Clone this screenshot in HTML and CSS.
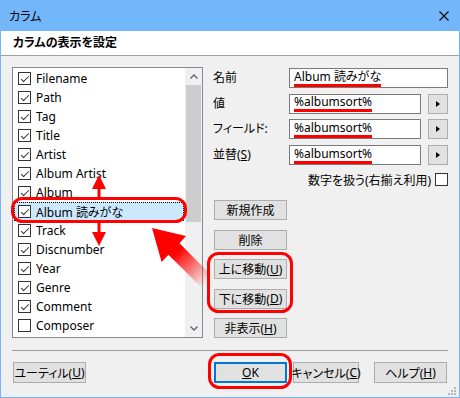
FILE: index.html
```html
<!DOCTYPE html>
<html lang="ja">
  <head>
    <meta charset="UTF-8" />
    <title>カラム</title>
    <link rel="stylesheet" href="styles.css">
  </head>
  <body>
    <div class="window">
      <header class="titlebar">
        <span class="title">カラム</span>
        <svg class="close" width="10" height="10" viewBox="0 0 10 10">
          <path d="M0.5 0.5 L9.5 9.5 M9.5 0.5 L0.5 9.5" stroke="#000" stroke-width="1.1" fill="none" />
        </svg>
      </header>

      <div class="heading">カラムの表示を設定</div>

      <section class="content">
        <div class="list">
          <ul class="items">
            <li><span class="cb on"></span>Filename</li>
            <li><span class="cb on"></span>Path</li>
            <li><span class="cb on"></span>Tag</li>
            <li><span class="cb on"></span>Title</li>
            <li><span class="cb on"></span>Artist</li>
            <li><span class="cb on"></span>Album Artist</li>
            <li><span class="cb on"></span>Album</li>
            <li class="selected"><span class="cb on"></span>Album 読みがな</li>
            <li><span class="cb on"></span>Track</li>
            <li><span class="cb on"></span>Discnumber</li>
            <li><span class="cb on"></span>Year</li>
            <li><span class="cb on"></span>Genre</li>
            <li><span class="cb on"></span>Comment</li>
            <li><span class="cb"></span>Composer</li>
          </ul>
          <div class="scrollbar">
            <span class="sb-btn">
              <svg width="8" height="5" viewBox="0 0 8 5"><path d="M0.5 4.5 L4 1 L7.5 4.5" stroke="#606060" stroke-width="1.3" fill="none" /></svg>
            </span>
            <span class="thumb"></span>
            <span class="sb-space"></span>
            <span class="sb-btn">
              <svg width="8" height="5" viewBox="0 0 8 5"><path d="M0.5 0.5 L4 4 L7.5 0.5" stroke="#606060" stroke-width="1.3" fill="none" /></svg>
            </span>
          </div>
        </div>

        <div class="side">
          <div class="fields">
            <label>名前</label>
            <div class="input wide"><span class="mark">Album 読みがな</span></div>

            <label>値</label>
            <div class="input"><span class="mark">%albumsort%</span></div>
            <button class="pick"><span class="tri"></span></button>

            <label>フィールド:</label>
            <div class="input"><span class="mark">%albumsort%</span></div>
            <button class="pick"><span class="tri"></span></button>

            <label>並替(<u>S</u>)</label>
            <div class="input"><span class="mark">%albumsort%</span></div>
            <button class="pick"><span class="tri"></span></button>
          </div>

          <div class="numeric">数字を扱う(右揃え利用)<span class="cb"></span></div>

          <div class="buttons">
            <button class="btn">新規作成</button>
            <button class="btn">削除</button>
            <button class="btn">上に移動(<u>U</u>)</button>
            <button class="btn">下に移動(<u>D</u>)</button>
            <button class="btn">非表示(<u>H</u>)</button>
          </div>
        </div>
      </section>

      <footer class="footer">
        <button class="btn utility">ユーティル(<u>U</u>)</button>
        <button class="btn ok"><u>O</u>K</button>
        <button class="btn cancel">キャンセル(<u>C</u>)</button>
        <button class="btn help">ヘルプ(<u>H</u>)</button>
      </footer>

      <!-- red annotations drawn over the dialog -->
      <svg class="overlay" width="460" height="398" viewBox="0 0 460 398">
        <defs>
          <linearGradient id="fade" gradientUnits="userSpaceOnUse" x1="152" y1="228" x2="208" y2="282">
            <stop offset="0" stop-color="#f00" />
            <stop offset="0.45" stop-color="#f00" />
            <stop offset="1" stop-color="#f00" stop-opacity="0" />
          </linearGradient>
        </defs>
        <rect x="12.5" y="198.5" width="173" height="23" rx="10" fill="none" stroke="#f00" stroke-width="3" />
        <rect x="208.5" y="253.5" width="83" height="58" rx="10" fill="none" stroke="#f00" stroke-width="3" />
        <rect x="209.5" y="354.5" width="81" height="33" rx="10" fill="none" stroke="#f00" stroke-width="3" />

        <polygon points="99,175 92,189 106,189" fill="#f00" />
        <rect x="97.5" y="188" width="3" height="10" fill="#f00" />
        <rect x="97.5" y="223" width="3" height="10" fill="#f00" />
        <polygon points="92,232 106,232 99,246" fill="#f00" />

        <polygon points="152,228 186,236 179.5,243.2 212,276 201,287 168.5,254.8 161.6,262" fill="url(#fade)" />

        <g fill="#b8b8b8">
          <rect x="454" y="387" width="2" height="2" />
          <rect x="451" y="390" width="2" height="2" />
          <rect x="454" y="390" width="2" height="2" />
          <rect x="448" y="393" width="2" height="2" />
          <rect x="451" y="393" width="2" height="2" />
          <rect x="454" y="393" width="2" height="2" />
        </g>
      </svg>
    </div>
  </body>
</html>
```

FILE: styles.css
```css
body {
  margin: 0;
  padding: 0;
  font-family: "Noto Sans", "Noto Sans CJK JP", sans-serif;
  font-size: 12px;
  font-feature-settings: "palt";
  color: #000;
}

u {
  text-underline-offset: 1px;
}

.window {
  position: relative;
  width: 460px;
  height: 398px;
  box-sizing: border-box;
  border: 1px solid #73b7fb;
  border-top: 0;
  background-color: #f0f0f0;
  display: flex;
  flex-direction: column;
}

.titlebar {
  height: 31px;
  flex: none;
  background-color: #73b7fb;
  display: flex;
  align-items: center;
  justify-content: space-between;
  padding: 0 10px 0 8px;
}

.heading {
  height: 24px;
  flex: none;
  line-height: 24px;
  background-color: #fff;
  border-bottom: 1px solid #a0a0a0;
  padding-left: 12px;
  font-weight: bold;
}

.content {
  height: 294px;
  box-sizing: border-box;
  display: flex;
  padding: 11px 0 0 11px;
}

/* column list */
.list {
  width: 191px;
  height: 271px;
  box-sizing: border-box;
  border: 1px solid #828790;
  background-color: #fff;
  display: flex;
}

.items {
  flex: 1;
  list-style: none;
  margin: 0;
  padding: 1px 0 0;
}

.items li {
  height: 19px;
  box-sizing: border-box;
  display: flex;
  align-items: center;
  gap: 5px;
  padding-left: 5px;
  white-space: nowrap;
}

.items li.selected {
  margin: 0 1px;
  padding-left: 3px;
  border: 1px dotted #000;
  background-color: #cce8ff;
}

.cb {
  position: relative;
  flex: none;
  width: 13px;
  height: 13px;
  box-sizing: border-box;
  border: 1px solid #333;
  background-color: #fff;
}

.cb.on::after {
  content: "";
  position: absolute;
  left: 3.5px;
  top: 0.5px;
  width: 3px;
  height: 7px;
  border: solid #333;
  border-width: 0 1.2px 1.2px 0;
  transform: rotate(45deg);
}

.scrollbar {
  width: 17px;
  flex: none;
  background-color: #f0f0f0;
  display: flex;
  flex-direction: column;
}

.sb-btn {
  height: 17px;
  flex: none;
  display: flex;
  align-items: center;
  justify-content: center;
}

.thumb {
  height: 137px;
  margin: 0 1px;
  background-color: #cdcdcd;
}

.sb-space {
  flex: 1;
}

/* right side */
.side {
  margin-left: 10px;
  padding-top: 1px;
  width: 235px;
  display: flex;
  flex-direction: column;
}

.fields {
  display: grid;
  grid-template-columns: 69px 132px 20px;
  column-gap: 7px;
  row-gap: 5.7px;
}

.fields label {
  line-height: 20px;
  white-space: nowrap;
}

.input {
  height: 20px;
  box-sizing: border-box;
  border: 1px solid #7a7a7a;
  background-color: #fff;
  padding-left: 4px;
  display: flex;
  align-items: center;
  white-space: nowrap;
}

.input.wide {
  grid-column: 2 / 4;
}

.mark {
  line-height: 14px;
  border-bottom: 3px solid #f00;
}

.pick {
  height: 20px;
  box-sizing: border-box;
  border: 1px solid #adadad;
  background-color: #e1e1e1;
  padding: 0;
  display: flex;
  align-items: center;
  justify-content: center;
}

.tri {
  width: 0;
  height: 0;
  border-left: 4px solid #000;
  border-top: 3.5px solid transparent;
  border-bottom: 3.5px solid transparent;
}

.numeric {
  margin-top: 8px;
  height: 13px;
  display: flex;
  align-items: center;
  justify-content: flex-end;
  gap: 4px;
  white-space: nowrap;
}

.buttons {
  margin: 14px 0 0 1px;
  display: flex;
  flex-direction: column;
  gap: 9.5px;
}

.btn {
  width: 73px;
  height: 20px;
  box-sizing: border-box;
  border: 1px solid #adadad;
  background-color: #e1e1e1;
  padding: 0;
  font-family: inherit;
  font-size: 12px;
  font-feature-settings: "palt";
  color: #000;
  display: flex;
  align-items: center;
  justify-content: center;
  white-space: nowrap;
}

/* footer */
.footer {
  margin: 0 11px;
  padding-top: 11px;
  border-top: 1px solid #a0a0a0;
  display: flex;
  align-items: flex-start;
}

.footer .btn {
  height: 21px;
}

.utility {
  margin-left: 1px;
}

.ok {
  margin-left: 128px;
  border: 2px solid #0078d7;
}

.cancel {
  margin-left: 6px;
  width: 66px;
}

.help {
  margin-left: 15px;
}

.overlay {
  position: absolute;
  left: -1px;
  top: 0;
  pointer-events: none;
}
```
